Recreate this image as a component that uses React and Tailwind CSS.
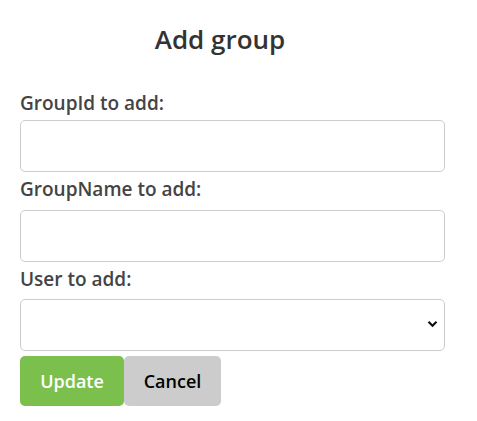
import React from 'react';

const fieldClass =
  'block w-[425px] h-[52px] rounded-[5px] border border-[#cccccc] bg-white px-3 text-[16px] outline-none';

const Label = ({ children }) => (
  <label className="block text-[19px] font-semibold text-[#444444] leading-[24px]">{children}</label>
);

const App = () => {
  return (
    <div className="min-h-screen bg-white font-['Open_Sans','Noto_Sans',sans-serif]">
      <div className="w-[440px] pt-[21px] pl-[20px]">
        <h2 className="text-center text-[26px] font-semibold text-[#333333] leading-[36px] w-[400px]">
          Add group
        </h2>
        <div className="mt-[34px]">
          <Label>GroupId to add:</Label>
          <input type="text" className={`${fieldClass} mt-[5px]`} />
        </div>
        <div className="mt-[5px]">
          <Label>GroupName to add:</Label>
          <input type="text" className={`${fieldClass} mt-[9px]`} />
        </div>
        <div className="mt-[5px]">
          <Label>User to add:</Label>
          <div className="relative mt-[8px] w-[425px]">
            <select className={`${fieldClass} h-[50px] appearance-none`}>
              <option value=""></option>
            </select>
            <svg
              className="pointer-events-none absolute right-[7px] top-[21px]"
              width="11"
              height="8"
              viewBox="0 0 11 8"
            >
              <path d="M1.5 1.8 L5.5 5.8 L9.5 1.8" fill="none" stroke="#111" strokeWidth="2.2" />
            </svg>
          </div>
        </div>
        <div className="flex mt-[5px]">
          <button className="h-[50px] w-[104px] rounded-[5px] bg-[#7bc04c] text-[18px] font-semibold text-white">
            Update
          </button>
          <button className="h-[50px] w-[97px] rounded-[5px] bg-[#cccccc] text-[18px] font-semibold text-black">
            Cancel
          </button>
        </div>
      </div>
    </div>
  );
};

export default App;
